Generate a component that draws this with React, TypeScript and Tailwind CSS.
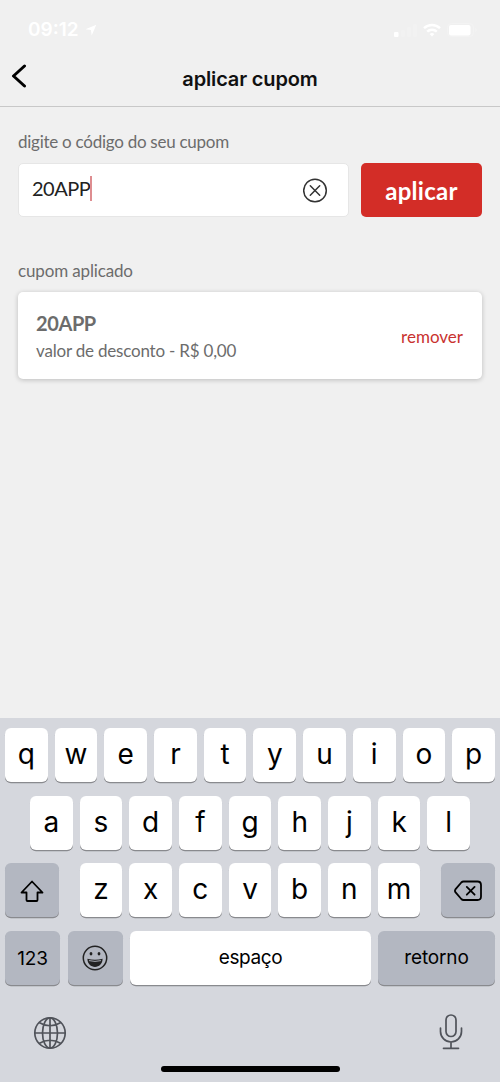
import type { ReactNode } from 'react';
import clsx from 'clsx';

const TOP_ROW = ['q', 'w', 'e', 'r', 't', 'y', 'u', 'i', 'o', 'p'];
const MIDDLE_ROW = ['a', 's', 'd', 'f', 'g', 'h', 'j', 'k', 'l'];
const BOTTOM_ROW = ['z', 'x', 'c', 'v', 'b', 'n', 'm'];

function StatusBar() {
  return (
    <div className="flex h-[54px] items-start justify-between pt-5 pr-[21px] pl-7 text-white">
      <div className="flex h-5 items-center gap-1.5">
        <span className="text-[19px] leading-5 font-semibold">09:12</span>
        <svg className="h-3 w-3" viewBox="0 0 14 14" fill="currentColor">
          <path d="M13.2.8 7.8 13.4 6.9 7.1.6 6.2z" />
        </svg>
      </div>
      <div className="flex h-5 items-center">
        <svg className="h-3.5 w-[23px]" viewBox="0 0 23 14" fill="currentColor">
          <rect x="0" y="9" width="4.5" height="5" rx="1" />
          <rect x="7" y="7" width="4" height="7" rx="1" opacity="0.15" />
          <rect x="13" y="4" width="4" height="10" rx="1" opacity="0.15" />
          <rect x="19" y="1" width="4" height="13" rx="1" opacity="0.15" />
        </svg>
        <svg className="ml-1.5 h-3.5 w-[18px]" viewBox="0 0 18 14" fill="none" stroke="currentColor" strokeWidth="2.4">
          <path d="M1 5.2a11.5 11.5 0 0 1 16 0" />
          <path d="M4.2 8.6a7 7 0 0 1 9.6 0" />
          <path d="M9 13.6 6.6 11.1a3.6 3.6 0 0 1 4.8 0z" fill="currentColor" stroke="none" />
        </svg>
        <svg className="ml-1.5 h-3.5 w-[32px]" viewBox="0 0 32 14">
          <rect x="0.5" y="0.5" width="26" height="13" rx="4" fill="none" stroke="currentColor" opacity="0.2" />
          <rect x="2" y="2" width="21.5" height="10.5" rx="2" fill="currentColor" />
          <path d="M28.5 5v4c1.5-.6 1.5-3.4 0-4z" fill="currentColor" opacity="0.35" />
        </svg>
      </div>
    </div>
  );
}

function Key({ children, className, dark }: { children: ReactNode; className?: string; dark?: boolean }) {
  return (
    <button
      className={clsx(
        'flex h-[54px] items-center justify-center rounded-[6px] text-black shadow-[0_1.3px_0_#898a8e]',
        dark ? 'bg-[#b3b7c1]' : 'bg-white',
        className,
      )}
    >
      {children}
    </button>
  );
}

function LetterKey({ letter }: { letter: string }) {
  return (
    <Key className="w-[42.7px] pb-0.5 text-[28px] leading-8 font-normal">
      {letter}
    </Key>
  );
}

function Keyboard() {
  return (
    <div className="flex h-[364px] flex-col bg-[#d5d7dd] px-[5px] pt-[10px]">
      <div className="flex flex-col gap-[13.7px]">
        <div className="flex justify-between">
          {TOP_ROW.map((letter) => <LetterKey key={letter} letter={letter} />)}
        </div>
        <div className="flex justify-center gap-[7px]">
          {MIDDLE_ROW.map((letter) => <LetterKey key={letter} letter={letter} />)}
        </div>
        <div className="flex justify-between">
          <Key dark className="w-[54px] pt-0.5">
            <svg className="h-[22px] w-6" viewBox="0 0 24 22" fill="none" stroke="currentColor" strokeWidth="1.8" strokeLinejoin="round">
              <path d="M12 1.5 22.5 12.5H17.5V20Q17.5 21 16.5 21H7.5Q6.5 21 6.5 20V12.5H1.5Z" />
            </svg>
          </Key>
          <div className="flex gap-[7px]">
            {BOTTOM_ROW.map((letter) => <LetterKey key={letter} letter={letter} />)}
          </div>
          <Key dark className="w-[54px] pt-0.5">
            <svg className="h-[22px] w-7" viewBox="0 0 28 22" fill="none" stroke="currentColor" strokeWidth="1.8" strokeLinejoin="round" strokeLinecap="round">
              <path d="M9.5 1.5H23.5Q27 1.5 27 5V16.5Q27 20 23.5 20H9.5Q8.3 20 7.3 19L1.4 12.2Q.5 10.8 1.4 9.4L7.3 2.5Q8.3 1.5 9.5 1.5Z" />
              <path d="m12.8 6.9 7.8 7.8m0-7.8-7.8 7.8" />
            </svg>
          </Key>
        </div>
        <div className="flex">
          <Key dark className="w-[55px] pt-0.5 text-[19px] font-normal tracking-[-0.2px]">123</Key>
          <Key dark className="ml-2 w-[55px] pr-px">
            <svg className="h-[26px] w-[26px]" viewBox="0 0 26 26" fill="none" stroke="#222" strokeWidth="1.5">
              <circle cx="13" cy="13" r="11.7" />
              <ellipse cx="9" cy="8.8" rx="1.4" ry="1.8" fill="#222" stroke="none" />
              <ellipse cx="17" cy="8.8" rx="1.4" ry="1.8" fill="#222" stroke="none" />
              <path d="M5.4 13.8Q13 15.6 20.6 13.8C20.6 19 17 21.9 13 21.9S5.4 19 5.4 13.8Z" fill="#222" stroke="none" />
              <path d="M7 15.6Q13 17.2 19 15.6" stroke="#b3b7c1" strokeWidth="0.9" />
            </svg>
          </Key>
          <Key className="ml-[7px] w-[241px] text-[19px] tracking-[-0.4px]">espaço</Key>
          <Key dark className="ml-[7px] w-[117px] text-[19px] tracking-[-0.15px]">retorno</Key>
        </div>
      </div>
      <div className="mt-7 flex items-start justify-between pr-8 pl-7 text-[#50535a]">
        <svg className="mt-[3px] h-[34px] w-[34px]" viewBox="0 0 34 34" fill="none" stroke="currentColor" strokeWidth="1.7">
          <circle cx="17" cy="17" r="15.2" />
          <ellipse cx="17" cy="17" rx="7.5" ry="15.2" />
          <path d="M17 1.8v30.4M1.800 17h30.4M6 6.5Q17 13 28 6.5M6 27.5Q17 21 28 27.5" />
        </svg>
        <svg className="h-[38px] w-6" viewBox="0 0 24 38" fill="none" stroke="currentColor" strokeWidth="1.7" strokeLinecap="round">
          <rect x="7" y="2" width="10" height="21.5" rx="5" />
          <path d="M1.5 15v3.500a10.5 10.5 0 0 0 21 0v-3.500M12 29v6M4.500 35.300h15" />
        </svg>
      </div>
      <div className="mx-auto mt-[15px] h-[6px] w-[179px] rounded-full bg-black" />
    </div>
  );
}

export default function App() {
  return (
    <div className="flex h-[1082px] w-[500px] flex-col overflow-hidden bg-[#f0f0f0] font-['Inter','Liberation_Sans',sans-serif]">
      <StatusBar />
      <header className="grid h-[53px] grid-cols-[60px_1fr_60px] items-center border-b border-[#c8c8c8]">
        <button className="pb-2 pl-[11px]">
          <svg className="h-6 w-4" viewBox="0 0 16 24" fill="none" stroke="black" strokeWidth="3" strokeLinecap="round" strokeLinejoin="round">
            <path d="M13.5 2 2.5 12l11 10" />
          </svg>
        </button>
        <h1 className="pb-0.5 text-center text-[20px] leading-6 font-semibold tracking-[-0.15px] text-[#111]">aplicar cupom</h1>
      </header>

      <main className="flex-1 px-[18px] pt-[23px] font-['Lato','Liberation_Sans',sans-serif] text-[#6c6c6c]">
        <label className="block text-[17px] leading-6 tracking-[-0.26px]">digite o código do seu cupom</label>
        <div className="mt-[9px] flex gap-3">
          <div className="flex h-[54px] w-[331px] items-center justify-between rounded-[5px] border border-[#e6e6e6] bg-white pr-5 pl-[13px]">
            <div className="flex items-center pb-1">
              <span className="text-[20px] leading-6 tracking-[-0.5px] text-[#222]">20APP</span>
              <span className="h-[25px] w-0.5 bg-[#de8d90]" />
            </div>
            <svg className="h-[25px] w-[25px]" viewBox="0 0 25 25" fill="none" stroke="#333" strokeWidth="1.5" strokeLinecap="round">
              <circle cx="12" cy="12.5" r="11.3" />
              <path d="m7.300 7.800 9.400 9.400m0-9.400-9.400 9.400" />
            </svg>
          </div>
          <button className="h-[54px] w-[121px] rounded-[5px] bg-[#d32d27] pt-0.5 text-[24px] font-bold tracking-[0.3px] text-white">aplicar</button>
        </div>

        <h2 className="mt-[42px] text-[17px] leading-6 tracking-[-0.15px]">cupom aplicado</h2>
        <section className="mt-[9px] flex h-[87px] items-center justify-between rounded-[5px] bg-white pr-[19px] pl-[18px] shadow-[0_1px_5px_rgba(0,0,0,0.22)]">
          <div className="pt-0.5">
            <p className="text-[20px] leading-7 font-bold tracking-[-0.4px]">20APP</p>
            <p className="text-[17px] leading-7 tracking-[-0.2px]">valor de desconto - R$ 0,00</p>
          </div>
          <button className="pt-0.5 text-[17px] text-[#c9322f]">remover</button>
        </section>
      </main>

      <Keyboard />
    </div>
  );
}
